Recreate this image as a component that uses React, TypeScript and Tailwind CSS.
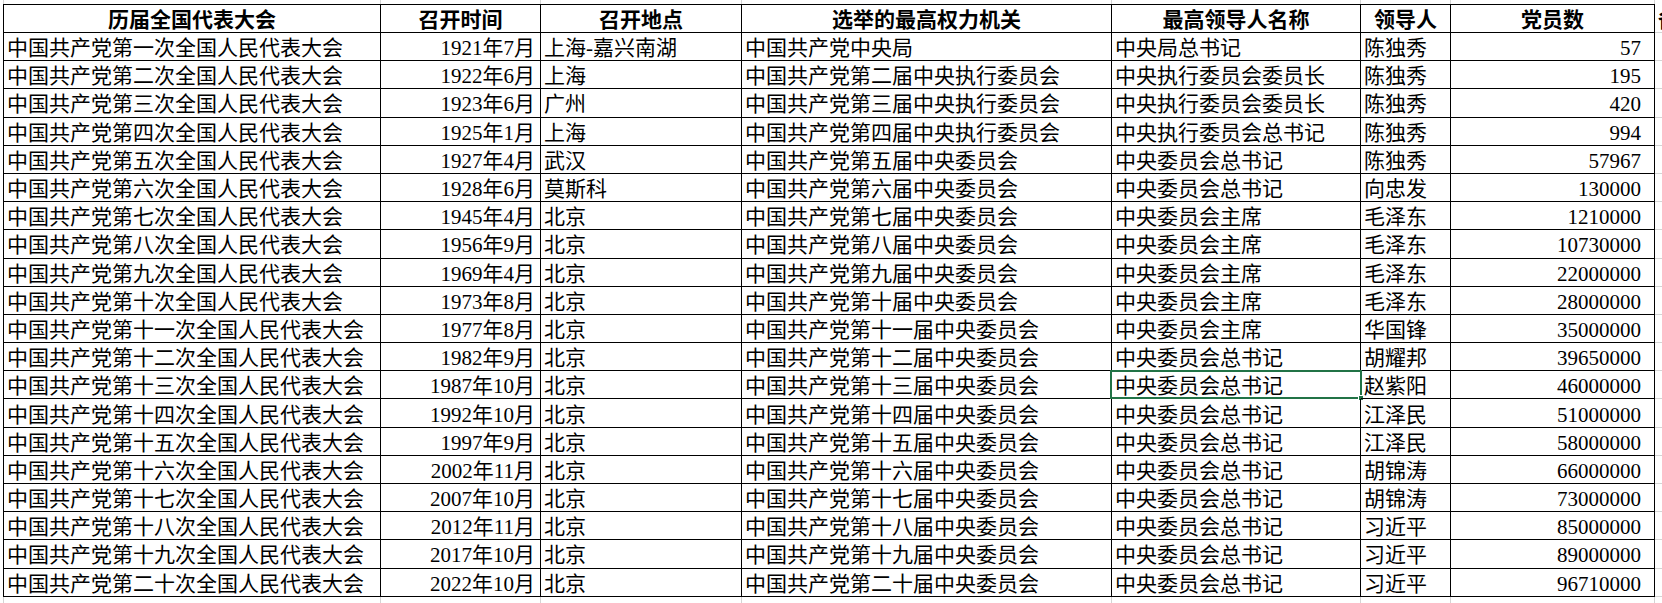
import React from "react";

const headers = [
  "历届全国代表大会",
  "召开时间",
  "召开地点",
  "选举的最高权力机关",
  "最高领导人名称",
  "领导人",
  "党员数",
];

const nums = ["一", "二", "三", "四", "五", "六", "七", "八", "九", "十", "十一", "十二", "十三", "十四", "十五", "十六", "十七", "十八", "十九", "二十"];
const dates = ["1921年7月", "1922年6月", "1923年6月", "1925年1月", "1927年4月", "1928年6月", "1945年4月", "1956年9月", "1969年4月", "1973年8月", "1977年8月", "1982年9月", "1987年10月", "1992年10月", "1997年9月", "2002年11月", "2007年10月", "2012年11月", "2017年10月", "2022年10月"];
const places = ["上海-嘉兴南湖", "上海", "广州", "上海", "武汉", "莫斯科", "北京", "北京", "北京", "北京", "北京", "北京", "北京", "北京", "北京", "北京", "北京", "北京", "北京", "北京"];
const titles = ["中央局总书记", "中央执行委员会委员长", "中央执行委员会委员长", "中央执行委员会总书记", "中央委员会总书记", "中央委员会总书记", "中央委员会主席", "中央委员会主席", "中央委员会主席", "中央委员会主席", "中央委员会主席", "中央委员会总书记", "中央委员会总书记", "中央委员会总书记", "中央委员会总书记", "中央委员会总书记", "中央委员会总书记", "中央委员会总书记", "中央委员会总书记", "中央委员会总书记"];
const leaders = ["陈独秀", "陈独秀", "陈独秀", "陈独秀", "陈独秀", "向忠发", "毛泽东", "毛泽东", "毛泽东", "毛泽东", "华国锋", "胡耀邦", "赵紫阳", "江泽民", "江泽民", "胡锦涛", "胡锦涛", "习近平", "习近平", "习近平"];
const members = ["57", "195", "420", "994", "57967", "130000", "1210000", "10730000", "22000000", "28000000", "35000000", "39650000", "46000000", "51000000", "58000000", "66000000", "73000000", "85000000", "89000000", "96710000"];

function organ(i: number): string {
  if (i === 0) return "中国共产党中央局";
  if (i <= 3) return `中国共产党第${nums[i]}届中央执行委员会`;
  return `中国共产党第${nums[i]}届中央委员会`;
}

const rows = nums.map((n, i) => [
  `中国共产党第${n}次全国人民代表大会`,
  dates[i],
  places[i],
  organ(i),
  titles[i],
  leaders[i],
  members[i],
]);

const align = ["left", "right", "left", "left", "left", "left", "right"];

const gridCols = "grid grid-cols-[378px_160px_201px_370px_249px_90px_204px_1fr]";

function Strip({ h }: { h: string }) {
  return (
    <div className={`${gridCols} ${h}`}>
      {Array.from({ length: 7 }).map((_, i) => (
        <div
          key={i}
          className={`border-r border-[#d4d4d4] ${i === 0 ? "border-l" : ""}`}
        />
      ))}
      <div />
    </div>
  );
}

export default function App() {
  return (
    <div
      className="w-[1662px] h-[603px] overflow-hidden bg-white text-black flex flex-col"
      style={{ fontFamily: '"Liberation Serif", "Noto Sans CJK SC", serif' }}
    >
      <div className="ml-[3px] flex flex-col">
        <Strip h="h-[4px]" />
        {/* header */}
        <div className={`${gridCols} h-[29px]`}>
          {headers.map((t, i) => (
            <div
              key={i}
              className={`border-t border-b border-r border-black flex items-center justify-center pt-[3px] font-bold text-[21px] leading-[24px] whitespace-nowrap overflow-hidden ${
                i === 0 ? "border-l" : ""
              }`}
            >
              {t}
            </div>
          ))}
          <div className="border-b border-[#d4d4d4] overflow-hidden flex items-center pl-[3px] pt-[3px] font-bold text-[21px] leading-[24px] whitespace-nowrap">
            备注
          </div>
        </div>
        {rows.map((r, ri) => (
          <div key={ri} className={`${gridCols} h-[28.2px]`}>
            {r.map((t, ci) => (
              <div
                key={ci}
                className={`relative border-b border-r border-black flex items-center pt-[3px] text-[21px] leading-[24px] whitespace-nowrap ${
                  ci === 0 ? "border-l" : ""
                } ${
                  align[ci] === "right"
                    ? ci === 6
                      ? "justify-end pr-[13px]"
                      : "justify-end pr-[5px]"
                    : "justify-start pl-[3px]"
                }`}
              >
                {t}
                {ri === 12 && ci === 4 && (
                  <div className="absolute -left-[2px] -top-[1px] -right-[2px] -bottom-[1px] border-2 border-[#217346] pointer-events-none">
                    <div className="absolute -right-[4px] -bottom-[4px] w-[6px] h-[6px] bg-[#217346] border border-white" />
                  </div>
                )}
              </div>
            ))}
            <div className="border-b border-[#d4d4d4]" />
          </div>
        ))}
        <Strip h="h-[8px]" />
      </div>
    </div>
  );
}
